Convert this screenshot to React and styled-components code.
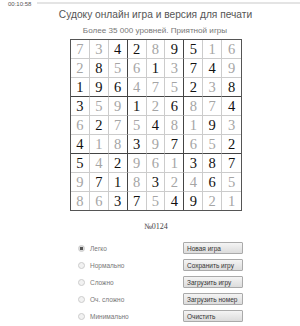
import React from "react";
import styled, { createGlobalStyle } from "styled-components";

const Global = createGlobalStyle`
  html, body { margin: 0; padding: 0; background: #fff; }
  body { font-family: "Liberation Sans", Arial, sans-serif; color: #444; }
`;

const Page = styled.div`
  width: 300px;
  height: 326px;
  position: relative;
  overflow: hidden;
`;

const TopBar = styled.div`
  display: flex;
  align-items: flex-start;
  height: 9px;
  padding: 0 0 0 8px;
  gap: 6px;
`;

const Clock = styled.span`
  font-size: 6px;
  line-height: 9px;
  color: #555;
`;

const TopLine = styled.div`
  flex: 1;
  height: 2px;
  margin-top: 2px;
  background: #e4e4e4;
`;

const Title = styled.h1`
  margin: 0;
  text-align: center;
  font-size: 10.2px;
  line-height: 12px;
  font-weight: normal;
  color: #555;
  padding-left: 11px;
`;

const Subtitle = styled.div`
  margin-top: 5px;
  text-align: center;
  font-size: 8.1px;
  line-height: 10px;
  color: #777;
  padding-left: 10px;
`;

const Board = styled.div`
  margin: 3px 0 0 70px;
  width: 170px;
  display: grid;
  grid-template-columns: repeat(9, 1fr);
  border: 1px solid #555;
`;

const Cell = styled.div`
  height: 18px;
  display: flex;
  align-items: center;
  justify-content: center;
  font-family: "Liberation Serif", "DejaVu Serif", serif;
  font-size: 14.5px;
  color: ${(p) => (p.$given ? "#111" : "#a5a5a5")};
  border-right: 1px solid ${(p) => (p.$boxRight ? "#444" : "#ccc")};
  border-bottom: 1px solid ${(p) => (p.$boxBottom ? "#444" : "#ccc")};
  &:nth-child(9n) { border-right: none; }
  &:nth-last-child(-n + 9) { border-bottom: none; }
`;

const Number = styled.div`
  margin-top: 11px;
  text-align: center;
  font-family: "Liberation Serif", serif;
  font-size: 8px;
  color: #444;
  padding-left: 12px;
`;

const Controls = styled.div`
  margin: 11px 0 0 77px;
  display: grid;
  grid-template-columns: 106px 60px;
  row-gap: 5px;
  align-items: center;
`;

const Option = styled.label`
  display: flex;
  align-items: center;
  gap: 5px;
  font-size: 6.5px;
  color: #777;
  padding-left: 1px;
`;

const Radio = styled.span`
  width: 5px;
  height: 5px;
  border-radius: 50%;
  border: 1px solid #ccc;
  background: ${(p) => (p.$on ? "radial-gradient(circle, #555 0 1.5px, #ddd 2px)" : "#f2f2f2")};
`;

const Button = styled.button`
  height: 12px;
  padding: 0 3px;
  text-align: left;
  font-family: "Liberation Sans", Arial, sans-serif;
  font-size: 6.5px;
  color: #333;
  border: 1px solid #aaa;
  border-radius: 1px;
  background: linear-gradient(#f4f4f4, #dcdcdc);
`;

const grid = [
  "7g3g4b2b8g9b5b1g6g",
  "2g8b5g6g1b3g7b4b9g",
  "1b9b6b4g7g5g2b3g8b",
  "3b5g9g1b2g6b8g7g4b",
  "6g2b7g5g4b8g1g9b3g",
  "4b1g8g3b9g7b6g5g2b",
  "5b4g2b9g6g1g3b8b7b",
  "9g7b1b8g3b2g4g6b5g",
  "8g6g3b7b5g4b9b2g1g",
];

const levels = ["Легко", "Нормально", "Сложно", "Оч. сложно", "Минимально"];
const actions = ["Новая игра", "Сохранить игру", "Загрузить игру", "Загрузить номер", "Очистить"];

export default function App() {
  return (
    <Page>
      <Global />
      <TopBar>
        <Clock>00:10:58</Clock>
        <TopLine />
      </TopBar>
      <Title>Судоку онлайн игра и версия для печати</Title>
      <Subtitle>Более 35 000 уровней. Приятной игры</Subtitle>
      <Board>
        {grid.map((row, r) =>
          Array.from({ length: 9 }, (_, c) => (
            <Cell
              key={r + "-" + c}
              $given={row[c * 2 + 1] === "b"}
              $boxRight={c % 3 === 2}
              $boxBottom={r % 3 === 2}
            >
              {row[c * 2]}
            </Cell>
          ))
        )}
      </Board>
      <Number>№0124</Number>
      <Controls>
        {levels.map((l, i) => (
          <React.Fragment key={l}>
            <Option>
              <Radio $on={i === 0} />
              {l}
            </Option>
            <Button>{actions[i]}</Button>
          </React.Fragment>
        ))}
      </Controls>
    </Page>
  );
}
